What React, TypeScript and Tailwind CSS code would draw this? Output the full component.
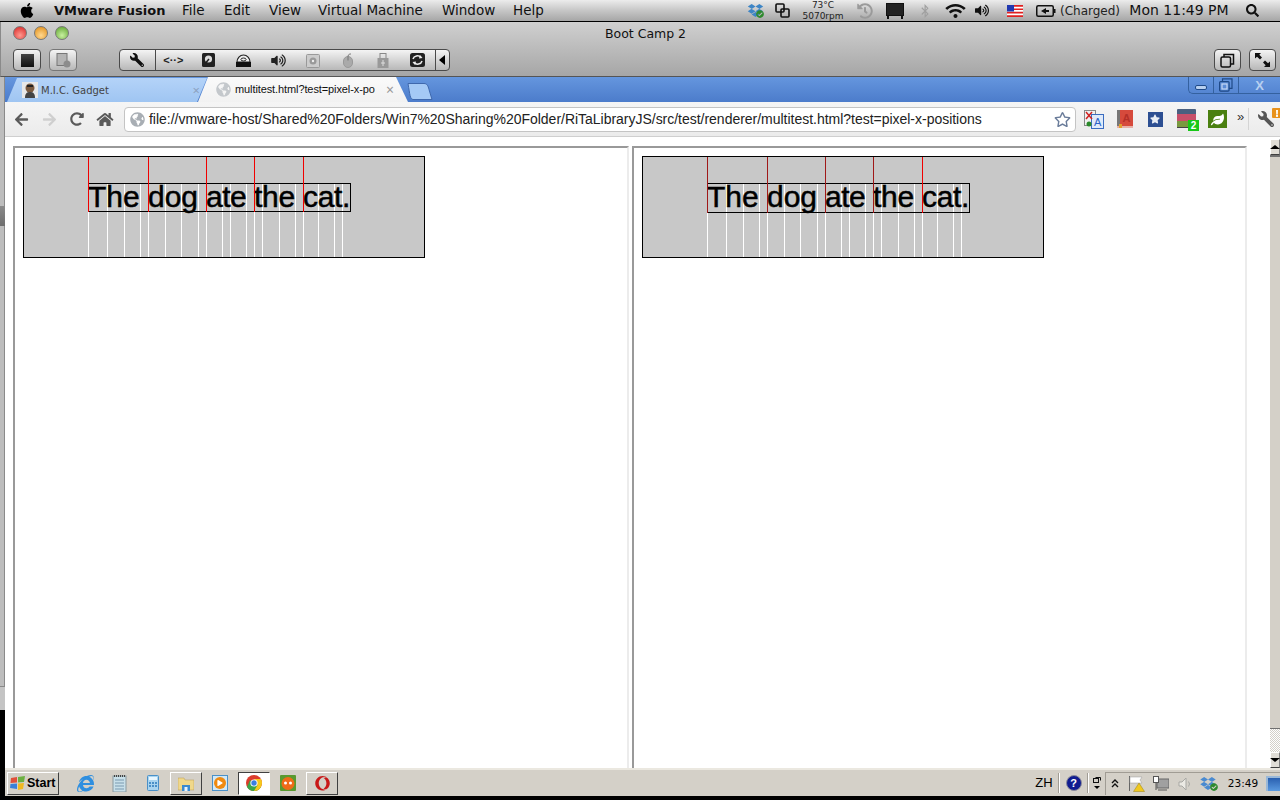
import React from "react";
import {
  FaApple, FaWrench, FaArrowLeft, FaArrowRight, FaRedoAlt, FaHome, FaVolumeUp, FaWifi, FaSearch, FaBluetoothB, FaDropbox, FaRegStar, FaStar, FaInternetExplorer, FaOpera, FaCheckCircle, FaLeaf, FaHistory, FaGlobeAmericas, FaPlay, FaExclamation,
} from "react-icons/fa";

const sans = "font-['Liberation_Sans',Arial,sans-serif]";
const lucida = "font-['DejaVu_Sans',sans-serif]";

const offs = [0, 19, 36, 52, 60, 77, 93, 110, 118, 134, 142, 158, 166, 174, 191, 207, 215, 230, 246, 254];
const words = [
  { t: "The", c: "w-[60px] -ml-px" },
  { t: "dog", c: "w-[58px]" },
  { t: "ate", c: "w-[48px] tracking-[-0.5px]" },
  { t: "the", c: "w-[49px] tracking-[-0.3px]" },
  { t: "cat.", c: "w-[47px] tracking-[-0.3px]" },
];
const reds = [0, 60, 118, 166, 215];

function Canvas({ dark }: { dark?: boolean }) {
  return (
    <div className="relative w-[402px] h-[102px] border border-black bg-[#c8c8c8] shrink-0">
      {offs.map((o) => (
        <div key={o} className="absolute w-px top-[27px] bottom-0 bg-white" style={{ left: 64 + o }} />
      ))}
      <div className={`absolute left-[64px] top-[26px] w-[263px] border border-black flex ${dark ? "h-[30px]" : "h-[29px]"}`}>
        {words.map((w) => (
          <span key={w.t} className={`${sans} ${w.c} text-[30px] leading-[26px] text-black shrink-0 whitespace-pre [-webkit-text-stroke:0.5px_black]`}>{w.t}</span>
        ))}
      </div>
      {reds.map((o, i) => (
        <div
          key={o}
          className={`absolute w-px top-0 ${dark ? "h-[56px]" : "h-[55px]"} ${dark && i < 4 ? "bg-[#a01818]" : "bg-[#f00000]"}`}
          style={{ left: 64 + o }}
        />
      ))}
    </div>
  );
}

function Frame({ w, dark }: { w: string; dark?: boolean }) {
  return (
    <div className={`${w} h-full border-l-2 border-t-2 border-r-2 border-l-[#999] border-t-[#999] border-r-[#ececec] bg-white pl-2 pt-2 shrink-0`}>
      <Canvas dark={dark} />
    </div>
  );
}

function MenuBar() {
  return (
    <div className={`${lucida} h-[22px] border-b border-black bg-linear-to-b from-[#ececec] via-[#c6c6c6] to-[#a6a6a6] flex items-center text-[13.5px] text-[#111] shrink-0`}>
      <div className="w-[16px] ml-[19px] flex justify-center"><FaApple className="w-[17px] h-[17px] text-black" /></div>
      <div className="ml-[19px] w-[128px] font-bold text-[13px]">VMware Fusion</div>
      <div className="w-[42px]">File</div>
      <div className="w-[45px]">Edit</div>
      <div className="w-[49px]">View</div>
      <div className="w-[124px]">Virtual Machine</div>
      <div className="w-[71px]">Window</div>
      <div>Help</div>
      <div className="ml-auto flex items-center h-full">
        <div className="w-[26px] flex justify-center relative">
          <FaDropbox className="w-[17px] h-[15px] text-[#3d85c6]" />
          <FaCheckCircle className="absolute left-[14px] top-[7px] w-[8px] h-[8px] text-[#2d8a2d]" />
        </div>
        <div className="w-[28px] flex justify-center">
          <svg width="15" height="15" viewBox="0 0 15 15" fill="none" stroke="#111" strokeWidth="1.6">
            <rect x="1" y="1" width="8" height="8" rx="1" />
            <rect x="6" y="6" width="8" height="8" rx="1" />
          </svg>
        </div>
        <div className={`${lucida} w-[54px] text-[9px] leading-[11px] text-center text-[#222] flex flex-col`}>
          <span>73°C</span>
          <span>5070rpm</span>
        </div>
        <div className="w-[30px] flex justify-center"><FaHistory className="w-[16px] h-[16px] text-[#9a9a9a]" /></div>
        <div className="w-[30px] flex justify-center">
          <svg width="18" height="16" viewBox="0 0 18 16">
            <rect x="0.5" y="0.5" width="17" height="12" fill="#222" stroke="#111" />
            <path d="M1 13h2v3h-2zM15 13h2v3h-2z" fill="#111" />
          </svg>
        </div>
        <div className="w-[30px] flex justify-center"><FaBluetoothB className="w-[12px] h-[14px] text-[#a0a0a0]" /></div>
        <div className="w-[30px] flex justify-center"><FaWifi className="w-[21px] h-[16px] text-[#111]" /></div>
        <div className="w-[24px] flex justify-center"><FaVolumeUp className="w-[14px] h-[13px] text-[#111]" /></div>
        <div className="w-[42px] flex justify-center">
          <svg width="16" height="12" viewBox="0 0 16 12">
            <rect width="16" height="12" fill="#fff" />
            <path d="M0 0h16v1.7H0zM0 3.4h16v1.7H0zM0 6.8h16v1.7H0zM0 10.2h16V12H0z" fill="#e02020" />
            <rect width="7" height="6.5" fill="#2038b0" />
          </svg>
        </div>
        <div className="w-[20px] flex justify-center">
          <svg width="20" height="12" viewBox="0 0 20 12">
            <rect x="0.75" y="0.75" width="16.5" height="10.5" rx="1.5" fill="none" stroke="#111" strokeWidth="1.5" />
            <rect x="18" y="4" width="1.5" height="4" fill="#111" />
            <path d="M5 6l5-3v2h3v2h-3v2z" fill="#111" />
          </svg>
        </div>
        <div className="w-[68px] text-center text-[12px] text-[#222]">(Charged)</div>
        <div className="w-[110px] text-center text-[14px] whitespace-nowrap">Mon 11:49 PM</div>
        <div className="w-[36px] flex justify-center"><FaSearch className="w-[13px] h-[13px] text-[#111]" /></div>
        <div className="w-[10px]" />
      </div>
    </div>
  );
}

function Light({ c }: { c: string }) {
  return <div className={`w-[14px] h-[14px] rounded-full border border-[#777] ${c}`} />;
}

function VmIcon({ children }: { children: React.ReactNode }) {
  return <div className="w-[35px] h-full flex items-center justify-center">{children}</div>;
}

const macBtn = "border border-[#4a4a4a] rounded-[4px] bg-linear-to-b from-[#f4f4f4] to-[#b8b8b8]";

function TitleBar() {
  return (
    <div className="h-[55px] bg-linear-to-b from-[#d0d0d0] to-[#a6a6a6] border-b border-[#555] border-l border-l-[#8a8a8a] relative shrink-0 flex flex-col">
      <div className="h-[27px] flex items-start relative pt-[4px]">
        <div className="flex gap-[7px] ml-[12px]">
          <Light c="bg-[radial-gradient(circle_at_50%_70%,#ff9a90,#d82020)]" />
          <Light c="bg-[radial-gradient(circle_at_50%_70%,#ffd890,#e08a10)]" />
          <Light c="bg-[radial-gradient(circle_at_50%_70%,#c8f0a0,#58a028)]" />
        </div>
        <div className={`${lucida} absolute left-0 right-0 top-[3px] text-center text-[12.5px] text-[#111] pl-[10px]`}>Boot Camp 2</div>
      </div>
      <div className="flex items-start">
        <div className={`${macBtn} ml-[12px] w-[28px] h-[22px] flex items-center justify-center`}>
          <div className="w-[13px] h-[13px] bg-linear-to-b from-[#444] to-[#111]" />
        </div>
        <div className={`${macBtn} ml-[8px] w-[28px] h-[22px] flex items-center justify-center border-[#777]`}>
          <svg width="15" height="15" viewBox="0 0 15 15">
            <rect x="1" y="0.5" width="10" height="12" fill="#b4b4b4" stroke="#777" />
            <circle cx="11" cy="11" r="3.5" fill="#8c8c8c" />
          </svg>
        </div>
        <div className={`${macBtn} ml-[42px] h-[22px] w-[331px] flex items-center`}>
          <div className="w-[36px] h-full flex items-center justify-center border-r border-[#4a4a4a]">
            <FaWrench className="w-[14px] h-[14px] -scale-x-100 text-[#111]" />
          </div>
          <VmIcon><span className={`${sans} text-[11px] leading-none text-[#222] font-bold`}>&lt;··&gt;</span></VmIcon>
          <VmIcon>
            <svg width="13" height="14" viewBox="0 0 13 14">
              <rect width="13" height="14" rx="1.5" fill="#222" />
              <circle cx="6.5" cy="6" r="3.6" fill="#ddd" />
              <path d="M2 12l5-6" stroke="#222" strokeWidth="1.5" />
            </svg>
          </VmIcon>
          <VmIcon>
            <svg width="15" height="13" viewBox="0 0 15 13">
              <path d="M1 8a6.5 7 0 0 1 13 0z" fill="#eee" stroke="#222" strokeWidth="1.2" />
              <ellipse cx="7.5" cy="5.5" rx="2.6" ry="1.5" fill="none" stroke="#222" />
              <rect y="8" width="15" height="5" fill="#111" />
            </svg>
          </VmIcon>
          <VmIcon><FaVolumeUp className="w-[15px] h-[13px] text-[#222]" /></VmIcon>
          <VmIcon>
            <svg width="14" height="15" viewBox="0 0 14 15">
              <rect x="0.5" y="1.5" width="13" height="13" rx="1" fill="#ccc" stroke="#999" />
              <circle cx="7" cy="8" r="3.5" fill="#999" />
              <circle cx="7" cy="8" r="1.2" fill="#eee" />
            </svg>
          </VmIcon>
          <VmIcon>
            <svg width="10" height="15" viewBox="0 0 10 15">
              <rect x="0.5" y="3.5" width="9" height="11" rx="4.5" fill="#aaa" stroke="#999" />
              <path d="M5 3.5v4M5 3.5C5 1 7 1 8 1" stroke="#777" fill="none" />
            </svg>
          </VmIcon>
          <VmIcon>
            <svg width="12" height="15" viewBox="0 0 12 15">
              <rect x="3" y="0.5" width="6" height="5" fill="none" stroke="#888" />
              <rect x="0.5" y="5" width="11" height="10" fill="#999" />
              <path d="M6 7v6M4 10h4" stroke="#ddd" />
            </svg>
          </VmIcon>
          <VmIcon>
            <svg width="15" height="14" viewBox="0 0 15 14">
              <rect width="15" height="14" rx="2.5" fill="#222" />
              <path d="M3 6a4.5 4 0 0 1 8-1.5M12 8a4.5 4 0 0 1-8 1.5" stroke="#eee" strokeWidth="1.5" fill="none" />
              <path d="M10 2l2.5 3L9 5.5zM5 12l-2.5-3L6 8.5z" fill="#eee" />
            </svg>
          </VmIcon>
          <div className="w-[14px] h-full border-l border-[#4a4a4a] flex items-center justify-center">
            <div className="w-0 h-0 border-y-[5px] border-y-transparent border-r-[6px] border-r-black" />
          </div>
        </div>
        <div className={`${macBtn} ml-auto w-[27px] h-[22px] flex items-center justify-center`}>
          <svg width="15" height="15" viewBox="0 0 15 15" fill="none" stroke="#111" strokeWidth="1.5">
            <rect x="1" y="4" width="9.5" height="10" rx="1.5" />
            <path d="M4 4V1.5h9.5V11H10.5" />
          </svg>
        </div>
        <div className={`${macBtn} ml-[8px] mr-[4px] w-[27px] h-[22px] flex items-center justify-center`}>
          <svg width="15" height="14" viewBox="0 0 15 14" fill="#111">
            <path d="M0 0h6L4.3 1.7 7 4.5 5 6.5 2 3.700 0 5.500zM15 14H9l1.700-1.700L8 9.500l2-2 3 2.800 2-1.800z" />
          </svg>
        </div>
      </div>
    </div>
  );
}

function Tabs() {
  return (
    <div className="h-[25px] bg-linear-to-b from-[#6596de] to-[#4c7ccb] flex items-end relative shrink-0">
      <div className="ml-[2px] w-[200px] h-[24px] shrink-0 bg-linear-to-b from-[#b4d3f8] to-[#9fc5f2] [clip-path:polygon(0_100%,10px_0,200px_0,190px_100%)] flex items-center pl-[15px]">
        <svg width="16" height="16" viewBox="0 0 16 16" className="shrink-0">
          <rect width="16" height="16" fill="#e8e8e8" />
          <circle cx="8" cy="6" r="4.5" fill="#7a5a40" />
          <path d="M3 16c0-5 2-6 5-6s5 1 5 6z" fill="#444" />
          <path d="M5 3h6v2H5z" fill="#222" />
        </svg>
        <span className={`${lucida} ml-[3px] text-[10px] text-[#444] whitespace-nowrap`}>M.I.C. Gadget</span>
        <span className="ml-auto mr-[7px] text-[#8ca2c0] text-[13px] leading-none">×</span>
      </div>
      <div className="-ml-[9px] w-[210px] h-[25px] shrink-0 bg-linear-to-b from-[#fafafa] to-[#f2f2f2] [clip-path:polygon(0_100%,10px_0,198px_0,210px_100%)] flex items-center pl-[18px] relative">
        <FaGlobeAmericas className="w-[15px] h-[15px] text-[#c4c8cc] shrink-0" />
        <span className={`${sans} ml-[4px] text-[11px] tracking-[-0.1px] text-[#111] whitespace-nowrap overflow-hidden w-[145px]`}>multitest.html?test=pixel-x-po</span>
        <span className="ml-[6px] text-[#999] text-[14px] leading-none">×</span>
      </div>
      <svg width="26" height="17" viewBox="0 0 26 17" className="-ml-[1px] mb-[2px] shrink-0">
        <path d="M1 0.5h16c3 0 4 2 5 6l3 10H6C3 16 3 12 1 0.5z" fill="#a5c9f5" stroke="#3f68ad" />
      </svg>
      <div className="ml-auto self-start w-[92px] h-[17px] flex border-l border-b border-[#34619f] rounded-bl-[5px]">
        <div className="w-[25px] border-r border-[#34619f] flex items-center justify-center pt-[4px]">
          <div className="w-[12px] h-[5px] rounded-[2px] border border-[#1f4a88] bg-[#b8d0f0]" />
        </div>
        <div className="w-[25px] border-r border-[#34619f] flex items-center justify-center">
          <svg width="14" height="14" viewBox="0 0 14 14" fill="none" stroke="#1f4a88" strokeWidth="1.2">
            <rect x="0.6" y="3.6" width="9.5" height="9.5" rx="1" />
            <path d="M3.5 3.5V0.8h9.500v9.500h-3" />
            <rect x="3" y="6" width="5" height="5" stroke="#c5d8f3" />
          </svg>
        </div>
        <div className={`${sans} flex-1 flex items-center justify-center text-[13px] leading-none text-[#b8d0f0] font-bold`}>X</div>
      </div>
    </div>
  );
}

function Toolbar() {
  return (
    <div className="h-[35px] bg-linear-to-b from-[#f5f5f5] to-[#ebebeb] border-b border-[#cfcfcf] flex items-center pl-[2px] shrink-0">
      <div className="w-[28px] flex justify-center"><FaArrowLeft className="w-[15px] h-[15px] text-[#5a5a5a]" /></div>
      <div className="w-[28px] flex justify-center"><FaArrowRight className="w-[15px] h-[15px] text-[#cfcfcf]" /></div>
      <div className="w-[28px] flex justify-center"><FaRedoAlt className="w-[14px] h-[14px] text-[#5a5a5a]" /></div>
      <div className="w-[28px] flex justify-center"><FaHome className="w-[18px] h-[15px] text-[#5a5a5a]" /></div>
      <div className="ml-[5px] w-[952px] h-[25px] bg-white border border-[#c4c4c4] rounded-[4px] flex items-center shrink-0 relative">
        <FaGlobeAmericas className="ml-[5px] w-[15px] h-[15px] text-[#a8aeb4] shrink-0" />
        <span className={`${sans} ml-[4px] text-[14px] tracking-[-0.02px] text-[#222] whitespace-nowrap`}>file://vmware-host/Shared%20Folders/Win7%20Sharing%20Folder/RiTaLibraryJS/src/test/renderer/multitest.html?test=pixel-x-positions</span>
        <FaRegStar className="absolute right-[4px] top-[3px] w-[17px] h-[17px] text-[#6a7c9a]" />
      </div>
      <div className="ml-[8px] w-[20px] flex justify-center relative">
        <svg width="20" height="19" viewBox="0 0 20 19">
          <rect x="0.5" y="0.5" width="11" height="15" fill="#f0f0f0" stroke="#888" />
          <rect x="7.5" y="4.5" width="12" height="14" fill="#dfeafa" stroke="#3a6cc0" />
          <text x="10" y="16" fontSize="11" fill="#2a60c8" fontFamily="Liberation Sans">A</text>
          <path d="M2 2l6 7M8 2l-6 7" stroke="#d02020" strokeWidth="1.5" />
          <circle cx="5" cy="14" r="2.5" fill="#2a8a2a" />
        </svg>
      </div>
      <div className="ml-[11px] w-[20px] flex justify-center">
        <svg width="16" height="18" viewBox="0 0 16 18">
          <rect width="16" height="16" fill="#d64a3c" />
          <rect width="3" height="16" fill="#777" />
          <rect y="16" width="16" height="2" fill="#e8b0a8" />
          <rect x="2" y="14" width="3" height="4" fill="#e0a030" />
          <text x="5.5" y="12" fontSize="11" fontWeight="bold" fill="#b43028" fontFamily="Liberation Sans">A</text>
        </svg>
      </div>
      <div className="ml-[10px] w-[20px] flex justify-center">
        <div className="w-[15px] h-[15px] bg-[#2d4f92] flex items-center justify-center"><FaStar className="w-[10px] h-[10px] text-[#e8edf5]" /></div>
      </div>
      <div className="ml-[11px] w-[22px] h-[24px] relative">
        <svg width="19" height="20" viewBox="0 0 19 20" className="absolute left-[1px] top-[1px]">
          <rect width="19" height="6" y="1" rx="1" fill="#4a6080" />
          <rect width="19" height="7" y="6" fill="#c8506a" />
          <rect width="19" height="6" y="13" fill="#7a9a40" />
          <rect width="19" height="1" y="19" fill="#444" />
        </svg>
        <span className={`${sans} absolute right-[-1px] bottom-0 w-[11px] h-[11px] bg-[#18c818] text-white text-[10px] leading-[11px] text-center font-bold`}>2</span>
      </div>
      <div className="ml-[10px] w-[19px] h-[18px] bg-[#4a8010] flex items-center justify-center shrink-0"><FaLeaf className="w-[13px] h-[13px] text-white" /></div>
      <div className={`${sans} ml-[10px] w-[10px] text-[13px] leading-none text-[#333] mb-[6px]`}>»</div>
      <div className="ml-[1px] w-px h-[22px] bg-[#d4d4d4]" />
      <div className="ml-[9px] relative w-[20px] h-[24px] flex items-center">
        <FaWrench className="w-[16px] h-[16px] -scale-x-100 text-[#555]" />
        <div className="absolute right-[-3px] top-[1px] w-[9px] h-[10px] bg-[#e8921c] rounded-[1px] flex items-center justify-center"><FaExclamation className="w-[6px] h-[7px] text-white" /></div>
      </div>
    </div>
  );
}

function Scrollbar() {
  const raised = "border-t border-l border-t-white border-l-white border-b border-r border-b-[#404040] border-r-[#808080]";
  return (
    <div className="w-[10px] h-full ml-auto flex flex-col pt-[2px] shrink-0 bg-white">
      <div className={`${raised} h-[16px] bg-[#e0ddd6] flex items-center justify-center shrink-0`}>
        <div className="w-0 h-0 border-x-[5px] border-x-transparent border-b-[4px] border-b-black" />
      </div>
      <div className="h-[574px] bg-[#d4d0c8] border-t-2 border-t-[#707070] border-b border-b-[#707070] shrink-0" />
      <div className="flex-1 bg-[repeating-conic-gradient(#d4d0c8_0_25%,#ffffff_0_50%)] bg-[length:2px_2px]" />
      <div className={`${raised} h-[16px] bg-[#e0ddd6] flex items-center justify-center shrink-0`}>
        <div className="w-0 h-0 border-x-[5px] border-x-transparent border-t-[4px] border-t-black" />
      </div>
    </div>
  );
}

function Content() {
  return (
    <div className="h-[631px] bg-white flex shrink-0">
      <div className="ml-[8px] mt-[9px] flex gap-[3px] h-[622px]">
        <Frame w="w-[616px]" />
        <Frame w="w-[615px]" dark />
      </div>
      <Scrollbar />
    </div>
  );
}

function TaskBtn({ pressed, children }: { pressed?: boolean; children: React.ReactNode }) {
  return (
    <div className={`w-[32px] h-[23px] flex items-center justify-center shrink-0 border ${pressed ? "bg-white border-t-[#404040] border-l-[#404040] border-b-white border-r-white" : "border-t-white border-l-white border-b-[#404040] border-r-[#404040]"}`}>
      {children}
    </div>
  );
}

function Chrome() {
  return (
    <svg width="16" height="16" viewBox="0 0 16 16">
      <circle cx="8" cy="8" r="8" fill="#dc3c2c" />
      <path d="M8 8L14.9 12A8 8 0 0 1 8 16 8 8 0 0 1 1 12l3-7z" fill="#3aa648" />
      <path d="M8 16a8 8 0 0 0 8-8 8 8 0 0 0-1-4H8l3.500 6z" fill="#f6c81c" />
      <circle cx="8" cy="8" r="3.6" fill="#fff" />
      <circle cx="8" cy="8" r="2.7" fill="#3a7ee0" />
    </svg>
  );
}

function Taskbar() {
  const sep = "w-[2px] h-[20px] border-l border-l-[#a09c94] border-r border-r-white shrink-0";
  return (
    <div className="h-[28px] bg-[#d4d0c8] border-t-2 border-t-[#ebe8e0] flex items-center pl-[2px] shrink-0">
      <div className="w-[52px] h-[23px] border border-t-white border-l-white border-b-[#404040] border-r-[#404040] flex items-center shrink-0">
        <svg width="16" height="14" viewBox="0 0 16 14" className="ml-[2px] shrink-0">
          <path d="M1 2l6-1v5.5L0.5 7z" fill="#e0503a" />
          <path d="M8 1l7-1-1 6-6 .5z" fill="#6cb040" />
          <path d="M0.5 8L7 7.500V13l-7-1z" fill="#3a80d8" />
          <path d="M8 7.500l6-.5-1 6-5 1z" fill="#f0b820" />
        </svg>
        <span className={`${sans} ml-[1px] text-[12.5px] font-bold text-black`}>Start</span>
      </div>
      <div className="ml-[9px] w-[34px] flex justify-center"><FaInternetExplorer className="w-[17px] h-[17px] text-[#2f8fe0]" /></div>
      <div className="w-[34px] flex justify-center">
        <svg width="15" height="17" viewBox="0 0 15 17">
          <rect x="1" y="1" width="13" height="16" fill="#c8e0ea" stroke="#8a9aa0" />
          <path d="M3 5h9M3 8h9M3 11h9M3 14h9" stroke="#7a9ab0" />
          <path d="M2 1h12" stroke="#444" strokeDasharray="1 1" strokeWidth="2" />
        </svg>
      </div>
      <div className="w-[34px] flex justify-center">
        <svg width="12" height="16" viewBox="0 0 12 16">
          <rect x="0.5" y="0.5" width="11" height="15" rx="1" fill="#a8d4f0" stroke="#4a90c8" />
          <rect x="2" y="2" width="8" height="3" fill="#e8f6ff" />
          <path d="M2 7h2v2H2zM5 7h2v2H5zM8 7h2v2H8zM2 10h2v2H2zM5 10h2v2H5zM8 10h2v2H8z" fill="#4a90c8" />
        </svg>
      </div>
      <TaskBtn>
        <svg width="16" height="15" viewBox="0 0 16 15">
          <path d="M0 2h6l1 2h9v10H0z" fill="#f0d88a" stroke="#b89a50" strokeWidth="0.5" />
          <rect x="4" y="9" width="8" height="6" fill="#3a8ad0" />
          <rect x="6.5" y="11" width="3" height="4" fill="#e8f4ff" />
        </svg>
      </TaskBtn>
      <div className="w-[36px] flex justify-center">
        <div className="w-[16px] h-[16px] border border-[#4a90c8] bg-[#d0e8f8] flex items-center justify-center">
          <div className="w-[12px] h-[12px] rounded-full bg-[#f08a10] flex items-center justify-center"><FaPlay className="w-[6px] h-[6px] text-white" /></div>
        </div>
      </div>
      <TaskBtn pressed><Chrome /></TaskBtn>
      <div className="w-[36px] flex justify-center">
        <svg width="16" height="16" viewBox="0 0 16 16">
          <rect width="16" height="16" rx="1" fill="#5a9a30" />
          <circle cx="8" cy="8.5" r="6.5" fill="#f06a18" />
          <circle cx="5.5" cy="8" r="1.5" fill="#fff" />
          <circle cx="10.5" cy="8" r="1.5" fill="#fff" />
        </svg>
      </div>
      <TaskBtn><FaOpera className="w-[15px] h-[15px] text-[#c81818]" /></TaskBtn>
      <div className="ml-auto flex items-center h-full">
        <div className={`${sans} w-[28px] text-center text-[13px] text-black`}>ZH</div>
        <div className={sep} />
        <div className="w-[27px] flex justify-center">
          <div className={`${sans} w-[16px] h-[16px] rounded-full bg-[#101c90] border border-[#8a8a9a] text-white text-[11px] leading-[14px] text-center font-bold`}>?</div>
        </div>
        <div className={sep} />
        <div className="w-[16px] flex flex-col items-center gap-[3px]">
          <svg width="8" height="6" viewBox="0 0 8 6" fill="none" stroke="#111"><rect x="0.5" y="1.5" width="5" height="4" /><path d="M2.5 0.5h5v3" /></svg>
          <div className="w-0 h-0 border-x-[3px] border-x-transparent border-t-[3px] border-t-black" />
        </div>
        <div className="w-[175px] h-[23px] border-t border-l border-[#a09c94] flex items-center">
          <div className="w-[17px] flex justify-center">
            <svg width="8" height="9" viewBox="0 0 8 9" fill="none" stroke="#111" strokeWidth="1.4">
              <path d="M1 4l3-3 3 3M1 8l3-3 3 3" />
            </svg>
          </div>
          <div className="w-[26px] flex justify-center">
            <svg width="17" height="17" viewBox="0 0 17 17">
              <path d="M1.5 1v15" stroke="#666" />
              <path d="M2 2h12l-2 3 2 3H2z" fill="#fff" stroke="#999" strokeWidth="0.5" />
              <path d="M11 8l5.500 8.500h-11z" fill="#f0c820" stroke="#9a8010" strokeWidth="0.5" />
            </svg>
          </div>
          <div className="w-[24px] flex justify-center">
            <svg width="16" height="15" viewBox="0 0 16 15">
              <rect x="4" y="3" width="12" height="9" fill="#a0a0a0" stroke="#666" />
              <rect x="0.5" y="0.5" width="5" height="6" fill="#fff" stroke="#555" />
              <path d="M3 6.500V14M5 14h9" stroke="#555" />
            </svg>
          </div>
          <div className="w-[23px] flex justify-center">
            <svg width="14" height="14" viewBox="0 0 14 14" fill="#eceae4" stroke="#a8a8a4">
              <path d="M1 5h3l4-4v12L4 9H1z" />
              <path d="M10.500 4.500a4 4 0 0 1 0 5" fill="none" />
            </svg>
          </div>
          <div className="w-[24px] flex justify-center relative">
            <FaDropbox className="w-[16px] h-[15px] text-[#4a8ad0]" />
            <FaCheckCircle className="absolute left-[14px] top-[7px] w-[8px] h-[8px] text-[#2d8a2d]" />
          </div>
          <div className={`${lucida} w-[46px] text-center text-[10.5px] text-black`}>23:49</div>
          <div className="w-[14px] h-[15px] bg-linear-to-b from-[#2a60b0] to-[#5a9ae0] border-t-2 border-l-2 border-[#9ab8d8]" />
        </div>
      </div>
    </div>
  );
}

function LeftStrip() {
  return (
    <div className="w-[5px] flex flex-col shrink-0">
      <div className="h-[129px] bg-[#bdbdbd] border-r border-[#8a8a8a]" />
      <div className="h-[20px] bg-linear-to-b from-[#8a8a8a] to-[#6e6e6e]" />
      <div className="h-[460px] bg-[#bdbdbd] border-r border-[#8a8a8a]" />
      <div className="h-[24px] bg-[#c4c4c4] border-t border-t-[#888]" />
    </div>
  );
}

export default function App() {
  return (
    <div className="w-[1280px] h-[800px] bg-black flex flex-col overflow-hidden">
      <MenuBar />
      <TitleBar />
      <div className="flex h-[719px] shrink-0">
        <LeftStrip />
        <div className="w-[1275px] flex flex-col shrink-0">
          <Tabs />
          <Toolbar />
          <Content />
          <Taskbar />
        </div>
      </div>
    </div>
  );
}
